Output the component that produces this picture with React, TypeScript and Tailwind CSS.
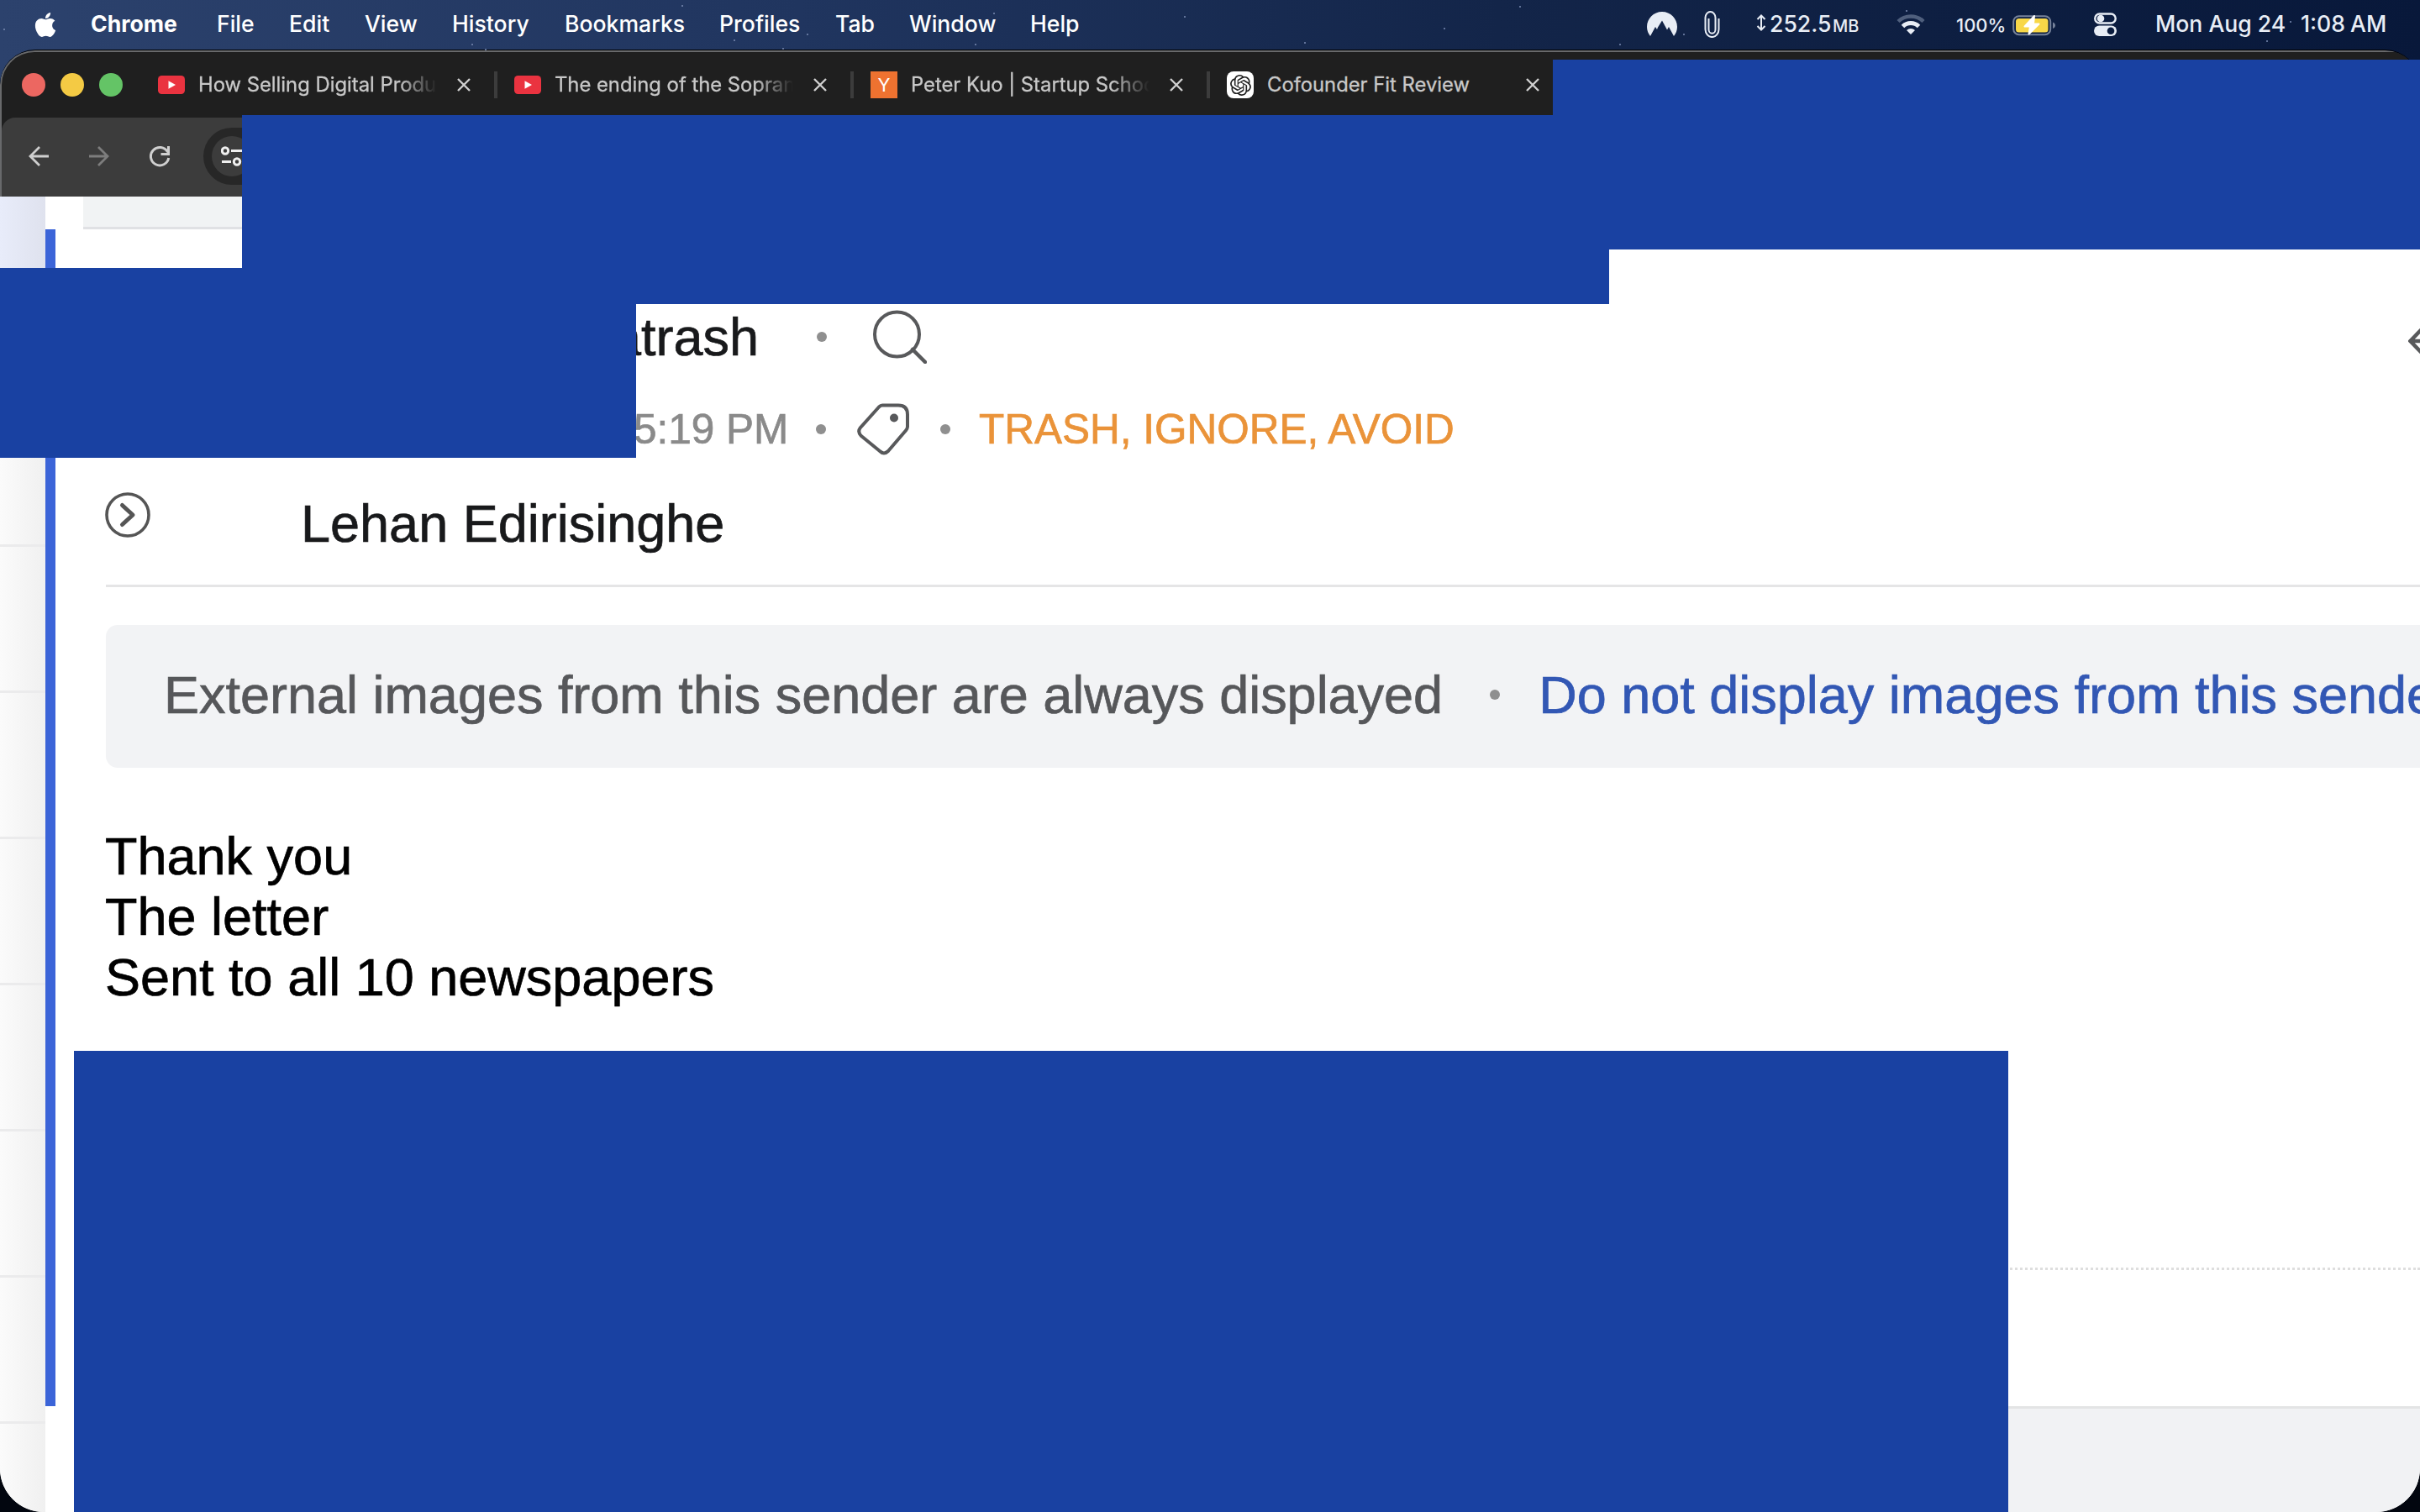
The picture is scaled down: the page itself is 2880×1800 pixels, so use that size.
import { FaApple } from 'react-icons/fa'
import { SiOpenai } from 'react-icons/si'

interface MenuEntry {
  label: string
  box: string
  text: string
}

interface Tab {
  title: string
  icon: 'youtube' | 'yc' | 'openai'
}

const menu: MenuEntry[] = [
  { label: 'Chrome', box: 'w-[150px]', text: 'font-bold' },
  { label: 'File', box: 'w-[86px]', text: 'font-medium' },
  { label: 'Edit', box: 'w-[90px]', text: 'font-medium' },
  { label: 'View', box: 'w-[104px]', text: 'font-medium' },
  { label: 'History', box: 'w-[134px]', text: 'font-medium' },
  { label: 'Bookmarks', box: 'w-[184px]', text: 'font-medium' },
  { label: 'Profiles', box: 'w-[138px]', text: 'font-medium' },
  { label: 'Tab', box: 'w-[88px]', text: 'font-medium' },
  { label: 'Window', box: 'w-[144px]', text: 'font-medium' },
  { label: 'Help', box: 'w-[80px]', text: 'font-medium' },
]

const tabs: Tab[] = [
  { title: 'How Selling Digital Products', icon: 'youtube' },
  { title: 'The ending of the Sopranos', icon: 'youtube' },
  { title: 'Peter Kuo | Startup School', icon: 'yc' },
  { title: 'Cofounder Fit Review', icon: 'openai' },
]

const stars = [
  [812, 7], [874, 48], [932, 58], [562, 53], [578, 59], [961, 41], [1161, 53], [1183, 16],
  [1410, 20], [1553, 51], [1719, 34], [1809, 8], [2004, 41], [2269, 13], [2698, 49], [2726, 26], [1928, 53], [5, 35],
]

const MenuBar = () => (
  <header className="flex h-[58px] shrink-0 items-center text-[26.600px] text-white">
    <FaApple className="mr-[39px] ml-[39px] h-[33px] w-[30px]" />
    {menu.map((item) => (
      <div key={item.label} className={item.box}>
        <span className={`whitespace-nowrap ${item.text}`}>{item.label}</span>
      </div>
    ))}
    <div className="ml-auto flex h-full items-center text-[#e8edf5]">
      <svg className="mr-[32px] h-[30px] w-[36px]" viewBox="0 0 36 30" fill="currentColor">
        <path d="M4 29C1.500 26 0 22 0 18 0 8 8 0 18 0s18 8 18 18c0 4-1.500 8-4 11l-6-11-2 3.500-6-11-5 8-1 2.500-2-3z" />
      </svg>
      <svg className="mr-[43px] h-[32px] w-[19px]" viewBox="0 0 19 32" fill="none" stroke="currentColor" strokeWidth="2">
        <path d="M17.500 9v13a7.500 8.500 0 0 1-16 0V8a6 7 0 0 1 12 0v14a3.700 4.500 0 0 1-8 0V9" />
      </svg>
      <svg className="mr-[4px] h-[20px] w-[12px] -translate-y-[2px]" viewBox="0 0 12 20" fill="none" stroke="currentColor" strokeWidth="2">
        <path d="M6 2v16M1.500 6 6 1.500 10.500 6M1.500 14 6 18.500 10.500 14" />
      </svg>
      <div className="flex w-[119px] items-baseline whitespace-nowrap">
        <span className="w-[74px] font-medium">252.5</span>
        <span className="ml-px text-[20px] font-medium">MB</span>
      </div>
      <svg className="mr-[37px] ml-[32px] h-[26px] w-[34px]" viewBox="0 0 34 26" fill="none" strokeWidth="5">
        <path d="M2 9.500a21.500 21.500 0 0 1 30 0" stroke="#4f5f7d" strokeWidth="4.500" />
        <path d="M7.500 15.500a13.500 13.500 0 0 1 19 0" stroke="currentColor" />
        <path d="M17 25l-5-5a7.500 7.500 0 0 1 10 0z" fill="currentColor" />
      </svg>
      <span className="mr-[10px] w-[57px] translate-y-px text-[22px] font-medium whitespace-nowrap">100%</span>
      <svg className="mr-[45px] h-[26px] w-[52px] translate-y-px" viewBox="0 0 52 26">
        <rect x="1.200" y="2.200" width="44" height="22" rx="6.500" fill="none" stroke="#76829a" strokeWidth="2" />
        <rect x="4" y="5" width="38.500" height="16.500" rx="3.500" fill="#f8d748" />
        <path d="M48 9.500c4 1.500 4 6 0 7.500z" fill="#76829a" />
        <path d="M26 2 14.500 14.500H21L19.500 23.500 31.500 11.500H25z" fill="#fff" stroke="#fff" strokeWidth="2" strokeLinejoin="round" />
      </svg>
      <svg className="mr-[46px] h-[28px] w-[27px]" viewBox="0 0 27 28">
        <rect x="1.200" y="1.500" width="24.500" height="11" rx="5.500" fill="none" stroke="currentColor" strokeWidth="2.400" />
        <circle cx="8" cy="7" r="4.300" fill="currentColor" />
        <rect y="15.500" width="27" height="12.500" rx="6.250" fill="currentColor" />
        <circle cx="20" cy="21.700" r="4.300" fill="#0a1b3d" />
      </svg>
      <span className="w-[173px] font-medium whitespace-nowrap">Mon Aug 24</span>
      <span className="w-[142px] font-medium whitespace-nowrap [word-spacing:-1px]">1:08 AM</span>
    </div>
  </header>
)

const TabIcon = ({ icon }: { icon: Tab['icon'] }) => {
  if (icon === 'youtube') {
    return (
      <svg className="h-[22px] w-[32px]" viewBox="0 0 32 22">
        <rect width="32" height="22" rx="4.500" fill="#ea3340" />
        <path d="M12.500 6.200 21 11l-8.500 4.800z" fill="#fff" />
      </svg>
    )
  }
  if (icon === 'yc') {
    return (
      <div className="flex h-[32px] w-[32px] items-center justify-center bg-[#ee7230] text-[22px] text-white">Y</div>
    )
  }
  return (
    <div className="flex h-[32px] w-[32px] items-center justify-center rounded-lg bg-white">
      <SiOpenai className="h-[25px] w-[25px] text-[#222]" />
    </div>
  )
}

const TabStrip = () => (
  <div className="flex h-[78px] items-center pl-[24px]">
    <div className="flex gap-[18px]">
      <span className="h-[28px] w-[28px] rounded-full bg-[#ec6761]" />
      <span className="h-[28px] w-[28px] rounded-full bg-[#f4ca44]" />
      <span className="h-[28px] w-[28px] rounded-full bg-[#64c466]" />
    </div>
    <div className="ml-[42px] flex">
      {tabs.map((tab, i) => (
        <div key={tab.title} className="flex w-[424px] items-center">
          <TabIcon icon={tab.icon} />
          <div
            className={
              'ml-[16px] w-[286px] overflow-hidden text-[23.800px] whitespace-nowrap text-[#c8c8c8] [-webkit-text-stroke:0.300px] ' +
              (i < 3 ? '[mask-image:linear-gradient(to_right,#000_238px,transparent_284px)]' : '')
            }
          >
            {tab.title}
          </div>
          <svg className="ml-[22px] h-[16px] w-[16px]" viewBox="0 0 16 16" stroke="#d0d0d0" strokeWidth="2.400">
            <path d="M1 1l14 14M15 1L1 15" />
          </svg>
          {i < 3 && <span className="ml-[28px] h-[32px] w-[4px] bg-[#3c3c3c]" />}
        </div>
      ))}
    </div>
  </div>
)

const Toolbar = () => (
  <div className="flex h-[94px] items-center rounded-tl-[16px] bg-[#3c3c3c] pb-[2px] pl-[32px]">
    <svg className="h-[24px] w-[24px]" viewBox="0 0 24 24" fill="none" stroke="#cfcfcf" strokeWidth="2.800">
      <path d="M24 12H2M13 1 2 12l11 11" />
    </svg>
    <svg className="ml-[48px] h-[24px] w-[24px]" viewBox="0 0 24 24" fill="none" stroke="#7d7d7d" strokeWidth="2.800">
      <path d="M0 12h22M11 1l11 11-11 11" />
    </svg>
    <svg className="ml-[47px] h-[26px] w-[26px]" viewBox="0 0 26 26" fill="none" stroke="#cfcfcf" strokeWidth="3">
      <path d="M22.500 8A10.700 10.700 0 1 0 23.700 15M23.500 1v9.500h-9" />
    </svg>
    <div className="ml-[39px] flex h-[68px] w-[200px] items-center rounded-full bg-[#272727] pl-[10px]">
      <div className="flex h-[48px] w-[48px] items-center rounded-full bg-[#3c3c3c] pl-[11px]">
        <svg className="h-[24px] w-[26px]" viewBox="0 0 26 24" fill="none" stroke="#efefef" strokeWidth="3">
          <circle cx="5" cy="5.500" r="3.700" />
          <path d="M12 5.500h13M1 18.500h11" />
          <circle cx="19" cy="18.500" r="3.700" />
        </svg>
      </div>
    </div>
  </div>
)

const Dot = () => <span className="h-[12px] w-[12px] shrink-0 rounded-full bg-[#8f8f8f]" />

const MessageList = () => (
  <aside className="flex w-[54px] shrink-0 flex-col">
    <div className="h-[240px] bg-linear-to-r from-[#e8ecfa] to-[#dfe2ee]" />
    <div className="flex-1 bg-linear-to-r from-[#fbfbfb] to-[#f0f0f0] pt-[174px]">
      {[0, 1, 2, 3, 4, 5, 6].map((n) => (
        <div key={n} className="h-[174px] border-t-[3px] border-[#ebebec]" />
      ))}
    </div>
  </aside>
)

const Message = () => (
  <article className="h-[1401px] border-l-[12px] border-[#3b64d8] bg-white pt-[88px] pl-[59px] [-webkit-text-stroke:0.700px]">
    <div className="flex h-[80px] items-center">
      <h1 className="ml-[603px] w-[244px] text-[63px] leading-[80px] text-[#18191b]">atrash</h1>
      <Dot />
      <svg className="ml-[55px] h-[64px] w-[64px]" viewBox="0 0 64 64" fill="none" stroke="#58595b" strokeWidth="4">
        <circle cx="28.500" cy="29" r="26.500" />
        <path d="M47 47l15 15" strokeWidth="4.500" strokeLinecap="round" />
      </svg>
      <svg className="ml-auto h-[50px] w-[14px] translate-y-[5px]" viewBox="0 0 14 50" fill="none" stroke="#58595b" strokeWidth="4.500">
        <path d="M30 25H3M17 10 2.500 25 17 40" />
      </svg>
    </div>
    <div className="mt-[30px] flex h-[80px] items-center text-[49.500px]">
      <span className="ml-[629px] w-[217px] leading-[76px] text-[#8a8a8a]">5:19 PM</span>
      <Dot />
      <svg className="ml-[36px] h-[64px] w-[64px]" viewBox="0 0 64 64" fill="none" stroke="#58595b" strokeWidth="4">
        <path
          d="M31 3.500h19q11 0 11 11v14q0 3-2 5L38 58q-5 5-10 0L6 40q-5-5-1-10L27 5.500q2-2 4-2z"
          strokeLinejoin="round"
        />
        <circle cx="45" cy="18.500" r="5" fill="#58595b" stroke="none" />
      </svg>
      <span className="ml-[36px] flex">
        <Dot />
      </span>
      <span className="ml-[34px] leading-[76px] text-[#ea9339]">TRASH, IGNORE, AVOID</span>
    </div>
    <div className="mt-[32px] flex h-[80px]">
      <svg className="mt-[3px] h-[54px] w-[54px]" viewBox="0 0 54 54" fill="none" stroke="#555" strokeWidth="3.600">
        <circle cx="27" cy="27" r="25" />
        <path d="M20.500 15.500 33 27 20.500 38.500" strokeWidth="5" strokeLinecap="round" strokeLinejoin="round" />
      </svg>
      <span className="ml-[179px] text-[63px] leading-[80px] text-[#18191b]">Lehan Edirisinghe</span>
    </div>
    <div className="mt-[33px] ml-px h-[3px] bg-[#e5e5e6]" />
    <div className="mt-[45px] ml-px flex h-[170px] items-center overflow-hidden rounded-l-[14px] bg-[#f2f3f5] pb-[4px] pl-[69px] text-[63px] whitespace-nowrap text-[#56575a]">
      <span className="tracking-[-0.020px]">External images from this sender are always displayed</span>
      <span className="ml-[56px] flex">
        <Dot />
      </span>
      <a className="ml-[46px] text-[#3257b4]">Do not display images from this sender</a>
    </div>
    <div className="mt-[69px] text-[63px] leading-[72.200px] text-black">
      <p>Thank you</p>
      <p>The letter</p>
      <p>Sent to all 10 newspapers</p>
    </div>
    <div className="mt-[309px] border-t-[3px] border-dotted border-[#dedede]" />
  </article>
)

// solid blocks that cover the private parts of the window
const Redactions = () => (
  <>
    <div className="absolute top-[71px] left-[1848px] h-[226px] w-[1032px] bg-[#1941a2]" />
    <div className="absolute top-[137px] left-[288px] h-[225px] w-[1627px] bg-[#1941a2]" />
    <div className="absolute top-[319px] left-0 h-[226px] w-[757px] bg-[#1941a2]" />
    <div className="absolute top-[1251px] left-[88px] h-[549px] w-[2302px] bg-[#1941a2]" />
  </>
)

export default function App() {
  return (
    <div className="relative flex h-[1800px] w-[2880px] flex-col overflow-hidden bg-[#02060f] bg-[linear-gradient(to_right,#2c426d,#20355f_33%,#132549_62%,#08183a)] bg-[length:100%_160px] bg-no-repeat font-['Inter',sans-serif]">
      <svg className="absolute inset-0 h-[60px] w-[2880px]" viewBox="0 0 2880 60" fill="#7b8db3">
        {stars.map(([x, y]) => (
          <circle key={`${x}-${y}`} cx={x} cy={y} r="1" />
        ))}
      </svg>
      <MenuBar />
      <div className="mt-px flex-1 overflow-hidden rounded-t-[42px] rounded-b-[52px] border-t border-black">
        <div className="flex h-full flex-col overflow-hidden rounded-t-[41px] bg-[#1f1f1f]">
          <div className="rounded-tl-[41px] border-t-2 border-l-2 border-[#68696b]">
            <TabStrip />
            <Toolbar />
          </div>
          <div className="flex flex-1 bg-white font-['Liberation_Sans',Arial,sans-serif]">
            <MessageList />
            <main className="flex min-w-0 flex-1 flex-col">
              <div className="ml-[45px] h-[39px] border-b-[3px] border-[#e0e1e4] bg-[#f1f3f4]" />
              <Message />
              <div className="ml-[45px] flex-1 border-t-[3px] border-[#e3e4e5] bg-[#f1f2f4]" />
            </main>
          </div>
        </div>
      </div>
      <Redactions />
    </div>
  )
}
